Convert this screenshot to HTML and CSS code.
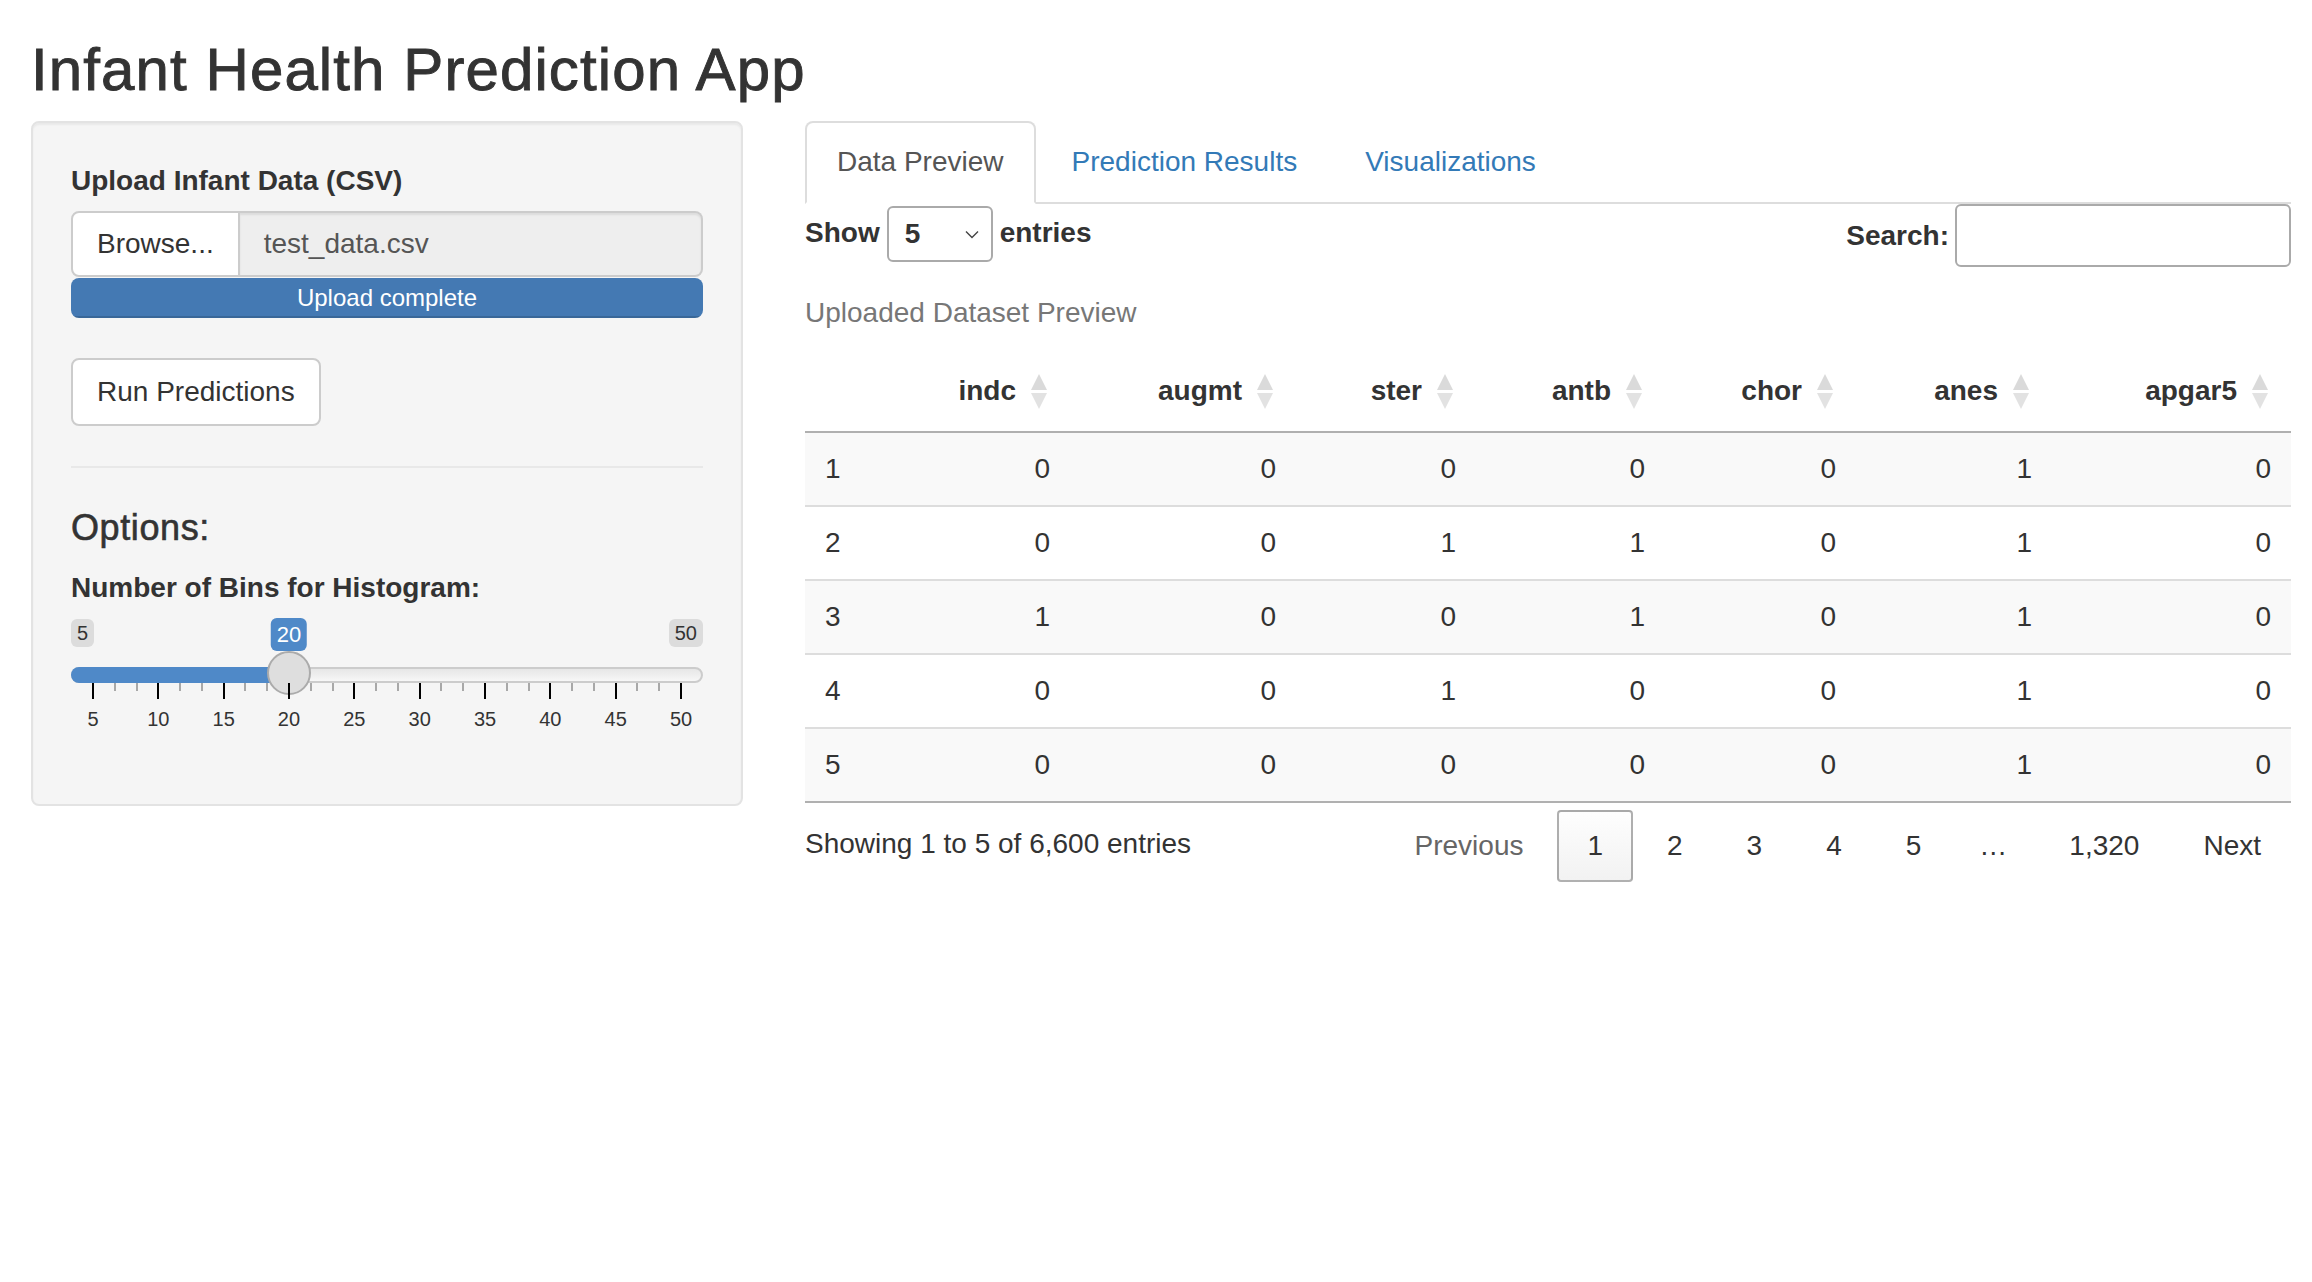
FILE: index.html
```html
<!DOCTYPE html>
<html lang="en">
<head>
<meta charset="utf-8">
<title>Infant Health Prediction App</title>
<link rel="stylesheet" href="styles.css">
</head>
<body>
<div class="page">
  <h2 class="title">Infant Health Prediction App</h2>
  <div class="layout">
    <aside class="well">
      <div class="form-group file-group">
        <label class="lbl">Upload Infant Data (CSV)</label>
        <div class="input-group">
          <span class="btn-file">Browse...</span>
          <span class="file-name">test_data.csv</span>
        </div>
        <div class="progress"><div class="progress-bar">Upload complete</div></div>
      </div>
      <div class="btn-row"><button class="btn">Run Predictions</button></div>
      <hr class="sep">
      <h4 class="opt-title">Options:</h4>
      <label class="lbl">Number of Bins for Histogram:</label>
      <div class="irs" style="--p: 0.33333;">
        <span class="irs-min">5</span>
        <span class="irs-max">50</span>
        <span class="irs-line"></span>
        <span class="irs-bar"></span>
        <span class="irs-single">20</span>
        <span class="irs-handle"></span>
        <div class="irs-grid">
          <span class="pol" style="left:0%"></span>
          <span class="pol small" style="left:3.704%"></span>
          <span class="pol small" style="left:7.407%"></span>
          <span class="pol" style="left:11.111%"></span>
          <span class="pol small" style="left:14.815%"></span>
          <span class="pol small" style="left:18.519%"></span>
          <span class="pol" style="left:22.222%"></span>
          <span class="pol small" style="left:25.926%"></span>
          <span class="pol small" style="left:29.630%"></span>
          <span class="pol" style="left:33.333%"></span>
          <span class="pol small" style="left:37.037%"></span>
          <span class="pol small" style="left:40.741%"></span>
          <span class="pol" style="left:44.444%"></span>
          <span class="pol small" style="left:48.148%"></span>
          <span class="pol small" style="left:51.852%"></span>
          <span class="pol" style="left:55.556%"></span>
          <span class="pol small" style="left:59.259%"></span>
          <span class="pol small" style="left:62.963%"></span>
          <span class="pol" style="left:66.667%"></span>
          <span class="pol small" style="left:70.370%"></span>
          <span class="pol small" style="left:74.074%"></span>
          <span class="pol" style="left:77.778%"></span>
          <span class="pol small" style="left:81.481%"></span>
          <span class="pol small" style="left:85.185%"></span>
          <span class="pol" style="left:88.889%"></span>
          <span class="pol small" style="left:92.593%"></span>
          <span class="pol small" style="left:96.296%"></span>
          <span class="pol" style="left:100%"></span>
          <span class="gtext" style="left:0%">5</span>
          <span class="gtext" style="left:11.111%">10</span>
          <span class="gtext" style="left:22.222%">15</span>
          <span class="gtext" style="left:33.333%">20</span>
          <span class="gtext" style="left:44.444%">25</span>
          <span class="gtext" style="left:55.556%">30</span>
          <span class="gtext" style="left:66.667%">35</span>
          <span class="gtext" style="left:77.778%">40</span>
          <span class="gtext" style="left:88.889%">45</span>
          <span class="gtext" style="left:100%">50</span>
        </div>
      </div>
    </aside>

    <main class="main">
      <ul class="tabs">
        <li class="tab active">Data Preview</li>
        <li class="tab">Prediction Results</li>
        <li class="tab">Visualizations</li>
      </ul>
      <div class="dt">
        <div class="dt-top">
          <div class="dt-length">Show <span class="select"><span class="sel-val">5</span><svg class="chev" width="14" height="9" viewBox="0 0 14 9"><polyline points="1,1.5 7,7.5 13,1.5" fill="none" stroke="#444" stroke-width="1.4"/></svg></span> entries</div>
          <div class="dt-filter">Search:<span class="search-input"></span></div>
        </div>
        <div class="dt-caption">Uploaded Dataset Preview</div>
        <table class="tbl">
          <colgroup>
            <col class="c-idx"><col class="c-indc"><col class="c-augmt"><col class="c-ster"><col class="c-antb"><col class="c-chor"><col class="c-anes"><col class="c-apgar">
          </colgroup>
          <thead>
            <tr>
              <th class="idx"></th>
              <th class="sort">indc</th>
              <th class="sort">augmt</th>
              <th class="sort">ster</th>
              <th class="sort">antb</th>
              <th class="sort">chor</th>
              <th class="sort">anes</th>
              <th class="sort">apgar5</th>
            </tr>
          </thead>
          <tbody>
            <tr class="odd"><td>1</td><td>0</td><td>0</td><td>0</td><td>0</td><td>0</td><td>1</td><td>0</td></tr>
            <tr class="even"><td>2</td><td>0</td><td>0</td><td>1</td><td>1</td><td>0</td><td>1</td><td>0</td></tr>
            <tr class="odd"><td>3</td><td>1</td><td>0</td><td>0</td><td>1</td><td>0</td><td>1</td><td>0</td></tr>
            <tr class="even"><td>4</td><td>0</td><td>0</td><td>1</td><td>0</td><td>0</td><td>1</td><td>0</td></tr>
            <tr class="odd"><td>5</td><td>0</td><td>0</td><td>0</td><td>0</td><td>0</td><td>1</td><td>0</td></tr>
          </tbody>
        </table>
        <div class="dt-bottom">
          <div class="dt-info">Showing 1 to 5 of 6,600 entries</div>
          <div class="dt-paginate">
            <span class="pbtn disabled">Previous</span><span class="pbtn current">1</span><span class="pbtn">2</span><span class="pbtn">3</span><span class="pbtn">4</span><span class="pbtn">5</span><span class="ellipsis">…</span><span class="pbtn">1,320</span><span class="pbtn">Next</span>
          </div>
        </div>
      </div>
    </main>
  </div>
</div>
</body>
</html>
```

FILE: styles.css
```css
* { box-sizing: border-box; }

html, body {
  margin: 0;
  padding: 0;
  background: #ffffff;
}

body {
  font-family: "Liberation Sans", Arial, Helvetica, sans-serif;
  font-size: 28px;
  line-height: 40px;
  color: #333333;
}

.page {
  padding: 0 21px 0 31px;
}

.title {
  font-size: 60px;
  font-weight: 500;
  line-height: 66px;
  letter-spacing: 1.1px;
  -webkit-text-stroke: 0.9px #333333;
  margin: 37px 0 18px 0;
}

.layout {
  display: flex;
  align-items: flex-start;
  gap: 62px;
}

/* ---------- Sidebar ---------- */
.well {
  width: 712px;
  flex: none;
  background: #f5f5f5;
  border: 2px solid #e3e3e3;
  border-radius: 8px;
  padding: 38px;
  box-shadow: inset 0 2px 2px rgba(0, 0, 0, 0.05);
}

.lbl {
  display: block;
  font-weight: 700;
  margin-bottom: 10px;
}

.input-group {
  display: flex;
  height: 66px;
}

.btn-file {
  display: flex;
  align-items: center;
  padding: 0 24px;
  background: #ffffff;
  border: 2px solid #cccccc;
  border-radius: 8px 0 0 8px;
  color: #333333;
}

.file-name {
  flex: 1;
  display: flex;
  align-items: center;
  padding: 0 24px;
  background: #eeeeee;
  border: 2px solid #cccccc;
  border-left: none;
  border-radius: 0 8px 8px 0;
  color: #555555;
  box-shadow: inset 0 2px 2px rgba(0, 0, 0, 0.075);
}

.progress {
  height: 40px;
  margin-top: 1px;
  margin-bottom: 40px;
  border-radius: 8px;
  overflow: hidden;
  background: #f5f5f5;
}

.progress-bar {
  height: 100%;
  background: #4479b3;
  color: #ffffff;
  font-size: 24px;
  line-height: 40px;
  text-align: center;
  box-shadow: inset 0 -2px 0 rgba(0, 0, 0, 0.15);
}

.btn-row {
  display: block;
}

.btn {
  height: 68px;
  padding: 0 24px;
  background: #ffffff;
  border: 2px solid #cccccc;
  border-radius: 8px;
  font-family: inherit;
  font-size: 28px;
  color: #333333;
}

.sep {
  margin: 40px 0 40px 0;
  border: 0;
  border-top: 2px solid #e8e8e8;
  height: 0;
}

.opt-title {
  font-size: 36px;
  font-weight: 500;
  line-height: 40px;
  letter-spacing: 0.6px;
  -webkit-text-stroke: 0.6px #333333;
  margin: 0 0 20px 0;
}

/* ---------- Slider ---------- */
.irs {
  position: relative;
  height: 120px;
  margin-bottom: 28px;
}

.irs-min,
.irs-max {
  position: absolute;
  top: 1px;
  padding: 1px 6px;
  font-size: 20px;
  line-height: 26px;
  color: #333333;
  background: rgba(0, 0, 0, 0.1);
  border-radius: 6px;
}

.irs-min { left: 0; }
.irs-max { right: 0; }

.irs-line {
  position: absolute;
  top: 49px;
  left: 0;
  right: 0;
  height: 16px;
  border: 2px solid #cccccc;
  border-radius: 16px;
  background: linear-gradient(to bottom, #dedede -50%, #ffffff 150%);
}

.irs-bar {
  position: absolute;
  top: 49px;
  left: 0;
  height: 16px;
  width: calc(22px + var(--p) * (100% - 44px));
  background: #4f89c8;
  border-radius: 16px 0 0 16px;
}

.irs-single {
  position: absolute;
  top: 0;
  left: calc(22px + var(--p) * (100% - 44px));
  transform: translateX(-50%);
  padding: 2px 6px;
  font-size: 22px;
  line-height: 29px;
  color: #ffffff;
  background: #4f89c8;
  border-radius: 6px;
}

.irs-handle {
  position: absolute;
  top: 33px;
  left: calc(var(--p) * (100% - 44px));
  width: 44px;
  height: 44px;
  border: 2px solid #ababab;
  border-radius: 50%;
  background: #dedede;
}

.irs-grid {
  position: absolute;
  top: 65px;
  left: 22px;
  right: 22px;
  height: 55px;
}

.pol {
  position: absolute;
  top: 0;
  width: 2px;
  height: 16px;
  margin-left: -1px;
  background: #000000;
}

.pol.small {
  height: 8px;
  background: #a8a8a8;
}

.gtext {
  position: absolute;
  top: 26px;
  transform: translateX(-50%);
  font-size: 20px;
  line-height: 20px;
  color: #333333;
}

/* ---------- Main ---------- */
.main {
  width: 1486px;
  flex: none;
}

.tabs {
  display: flex;
  list-style: none;
  margin: 0;
  padding: 0;
  border-bottom: 2px solid #dddddd;
}

.tab {
  margin-right: 4px;
  margin-bottom: -2px;
  padding: 19px 30px 20px 30px;
  line-height: 40px;
  border: 2px solid transparent;
  border-radius: 8px 8px 0 0;
  color: #337ab7;
}

.tab.active {
  color: #555555;
  background: #ffffff;
  border-color: #dddddd #dddddd transparent #dddddd;
}

.dt-top {
  display: flex;
  justify-content: space-between;
  align-items: flex-start;
  height: 63px;
}

.dt-length {
  display: flex;
  align-items: center;
  gap: 7px;
  height: 58px;
  font-weight: 700;
}

.select {
  display: flex;
  align-items: center;
  justify-content: space-between;
  width: 106px;
  height: 56px;
  margin-top: 2px;
  padding: 0 12px 0 16px;
  border: 2px solid #aaaaaa;
  border-radius: 6px;
  font-weight: 700;
}

.chev { display: block; }

.dt-filter {
  display: flex;
  align-items: center;
  height: 63px;
  font-weight: 700;
}

.search-input {
  width: 336px;
  height: 63px;
  margin-left: 6px;
  border: 2px solid #aaaaaa;
  border-radius: 6px;
  background: #ffffff;
}

.dt-caption {
  color: #777777;
  padding: 26px 0 18px 0;
  line-height: 40px;
}

.tbl {
  width: 100%;
  table-layout: fixed;
  border-collapse: separate;
  border-spacing: 0;
}

.c-idx { width: 120px; }
.c-indc { width: 145px; }
.c-augmt { width: 226px; }
.c-ster { width: 180px; }
.c-antb { width: 189px; }
.c-chor { width: 191px; }
.c-anes { width: 196px; }
.c-apgar { width: 239px; }

.tbl th {
  position: relative;
  padding: 20px 54px 20px 20px;
  line-height: 40px;
  font-weight: 700;
  text-align: right;
  border-bottom: 2px solid #b0b0b0;
}

.tbl th.sort::before,
.tbl th.sort::after {
  content: "";
  position: absolute;
  right: 23px;
  width: 0;
  height: 0;
  border-left: 8px solid transparent;
  border-right: 8px solid transparent;
}

.tbl th.sort::before {
  top: 23px;
  border-bottom: 16px solid #dadada;
}

.tbl th.sort::after {
  top: 42px;
  border-top: 16px solid #e2e2e2;
}

.tbl td {
  padding: 16px 20px;
  line-height: 40px;
  text-align: right;
  border-top: 2px solid #dddddd;
}

.tbl td:first-child { text-align: left; }

.tbl tbody tr:first-child td { border-top: none; }

.tbl tbody tr:last-child td { border-bottom: 2px solid #b0b0b0; }

.tbl tr.odd td { background: #f9f9f9; }

.dt-bottom {
  display: flex;
  justify-content: space-between;
  align-items: flex-start;
}

.dt-info {
  padding-top: 21px;
}

.dt-paginate {
  display: flex;
  align-items: flex-start;
  padding-top: 7px;
}

.pbtn {
  display: inline-block;
  min-width: 42px;
  margin-left: 4px;
  padding: 14px 28px;
  line-height: 40px;
  text-align: center;
  border: 2px solid transparent;
  border-radius: 4px;
  color: #333333;
}

.pbtn.disabled { color: #666666; }

.pbtn.current {
  border-color: rgba(0, 0, 0, 0.3);
  background: linear-gradient(to bottom, rgba(230, 230, 230, 0.05) 0%, rgba(0, 0, 0, 0.05) 100%);
}

.ellipsis {
  display: inline-block;
  padding: 16px 28px;
  line-height: 40px;
}
```
